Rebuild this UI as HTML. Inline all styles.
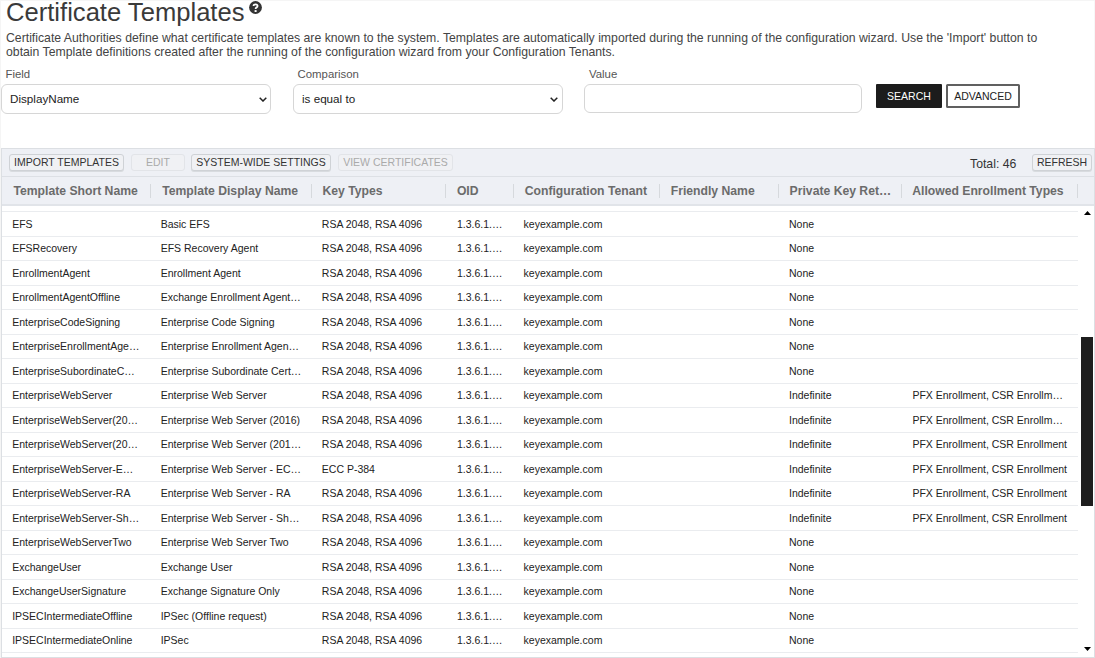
<!DOCTYPE html>
<html><head><meta charset="utf-8">
<style>
html,body{margin:0;padding:0;}
body{width:1095px;height:658px;overflow:hidden;position:relative;background:#fff;box-shadow:inset 1px 1px 0 #f5f5f5, inset -1px 0 0 #f7f7f7;font-family:"Liberation Sans",sans-serif;color:#333;}
.abs{position:absolute;white-space:nowrap;}
#title{left:6px;top:-3.3px;font-size:25.6px;line-height:30px;color:#3a3a3a;}
#help{left:249px;top:1.3px;width:12.8px;height:12.8px;border-radius:50%;background:#333;color:#fff;font-size:10.5px;font-weight:bold;line-height:14.5px;text-align:center;}
#desc{left:6px;top:32.3px;font-size:12.25px;line-height:13.5px;color:#444;}
.lbl{font-size:11.4px;line-height:14px;color:#555;top:67px;}
.sel{top:84px;height:30px;box-sizing:border-box;border:1px solid #d6d6d6;border-radius:6px;background:#fff;font-size:11.67px;color:#222;line-height:28px;padding-left:8px;}
.chev{position:absolute;top:12px;width:8px;height:5px;}
#search{left:876px;top:84px;width:66px;height:23.5px;background:#1c1c1c;color:#fff;font-size:10.5px;line-height:24px;border-radius:1px;text-align:center;}
#adv{left:946px;top:84px;width:74px;height:23.5px;box-sizing:border-box;border:2px solid #606060;border-radius:1.5px;background:#fff;color:#222;font-size:10.5px;line-height:21px;text-align:center;}
#grid{left:1px;top:148px;width:1094px;height:510px;box-sizing:border-box;border:1px solid #dcdfe3;border-bottom:1px solid #dcdfe3;background:#fff;overflow:hidden;}
#toolbar{position:absolute;left:0;top:0;width:100%;height:27px;background:#eef0f5;border-bottom:1px solid #dde0e5;}
.btn{position:absolute;top:5px;height:16.5px;box-sizing:border-box;border:1px solid #cfd2d6;border-radius:3px;background:#f0f1f4;font-size:10.5px;line-height:15px;color:#333;text-align:center;box-shadow:0 1px 0 #d8dbdf;}
.btn.dis{color:#aaa;border-color:#e2e4e8;box-shadow:none;}
#total{position:absolute;left:968px;top:7px;font-size:12.25px;line-height:16px;color:#333;}
#header{position:absolute;left:0;top:28px;width:100%;height:27px;background:#eef0f5;border-bottom:2px solid #e1e4e9;}
.h{position:absolute;top:1px;line-height:27px;font-size:12.2px;font-weight:bold;color:#6b6b6b;white-space:nowrap;}
.sep{position:absolute;top:7px;width:1px;height:14px;background:#d6d9dd;}
#body{position:absolute;left:0;top:57px;width:1092px;height:452px;overflow:hidden;}
.row{position:absolute;left:0;width:1076px;height:24.5px;border-bottom:1px solid #eaecef;box-sizing:border-box;}
.c{position:absolute;top:0.8px;line-height:23.5px;font-size:10.5px;color:#222;white-space:nowrap;}
#thumb{position:absolute;left:1079px;top:188px;width:12px;height:169px;background:#1e1e1e;}
</style></head><body>
<div class="abs" id="title">Certificate Templates</div>
<svg class="abs" style="left:248.9px;top:1.2px" width="13" height="13" viewBox="0 0 13 13"><circle cx="6.5" cy="6.5" r="6.4" fill="#333"/><path d="M4.5 5.1 C4.5 3.9 5.4 3.3 6.5 3.3 C7.7 3.3 8.6 4.0 8.6 5.0 C8.6 6.1 7.4 6.4 6.9 7.0 C6.7 7.3 6.6 7.6 6.6 8.1" fill="none" stroke="#fff" stroke-width="1.7"/><rect x="5.6" y="9.1" width="2" height="1.9" fill="#fff"/></svg>
<div class="abs" id="desc">Certificate Authorities define what certificate templates are known to the system. Templates are automatically imported during the running of the configuration wizard. Use the 'Import' button to<br>obtain Template definitions created after the running of the configuration wizard from your Configuration Tenants.</div>
<div class="abs lbl" style="left:5.5px">Field</div>
<div class="abs lbl" style="left:297.5px">Comparison</div>
<div class="abs lbl" style="left:589px">Value</div>
<div class="abs sel" style="left:1px;width:270px">DisplayName<svg class="chev" style="left:257px" viewBox="0 0 8 5"><path d="M0.7 0.7 L4 4 L7.3 0.7" fill="none" stroke="#222" stroke-width="1.5"/></svg></div>
<div class="abs sel" style="left:293px;width:270px">is equal to<svg class="chev" style="left:256px" viewBox="0 0 8 5"><path d="M0.7 0.7 L4 4 L7.3 0.7" fill="none" stroke="#222" stroke-width="1.5"/></svg></div>
<div class="abs sel" style="left:584px;width:278px;height:28.5px"></div>
<div class="abs" id="search">SEARCH</div>
<div class="abs" id="adv">ADVANCED</div>
<div class="abs" id="grid">
 <div id="toolbar">
  <div class="btn" style="left:7px;width:115px">IMPORT TEMPLATES</div>
  <div class="btn dis" style="left:129px;width:54px">EDIT</div>
  <div class="btn" style="left:189px;width:140px">SYSTEM-WIDE SETTINGS</div>
  <div class="btn dis" style="left:336px;width:115px">VIEW CERTIFICATES</div>
  <div id="total">Total: 46</div>
  <div class="btn" style="left:1030px;width:60px">REFRESH</div>
 </div>
 <div id="header"><span class="h" style="left:11.40px">Template Short Name</span><span class="h" style="left:160.20px">Template Display Name</span><span class="h" style="left:320.40px">Key Types</span><span class="h" style="left:454.90px">OID</span><span class="h" style="left:522.70px">Configuration Tenant</span><span class="h" style="left:668.70px">Friendly Name</span><span class="h" style="left:787.60px">Private Key Ret…</span><span class="h" style="left:910.20px">Allowed Enrollment Types</span><i class="sep" style="left:148.00px"></i><i class="sep" style="left:309.00px"></i><i class="sep" style="left:443.00px"></i><i class="sep" style="left:511.00px"></i><i class="sep" style="left:657.00px"></i><i class="sep" style="left:776.00px"></i><i class="sep" style="left:899.00px"></i><i class="sep" style="left:1075.00px"></i></div>
 <div id="body"><div class="row" style="top:-18.50px"></div><div class="row" style="top:6.00px"><span class="c" style="left:10.20px">EFS</span><span class="c" style="left:158.70px">Basic EFS</span><span class="c" style="left:319.80px">RSA 2048, RSA 4096</span><span class="c" style="left:455.00px">1.3.6.1.…</span><span class="c" style="left:521.60px">keyexample.com</span><span class="c" style="left:787.00px">None</span></div><div class="row" style="top:30.50px"><span class="c" style="left:10.20px">EFSRecovery</span><span class="c" style="left:158.70px">EFS Recovery Agent</span><span class="c" style="left:319.80px">RSA 2048, RSA 4096</span><span class="c" style="left:455.00px">1.3.6.1.…</span><span class="c" style="left:521.60px">keyexample.com</span><span class="c" style="left:787.00px">None</span></div><div class="row" style="top:55.00px"><span class="c" style="left:10.20px">EnrollmentAgent</span><span class="c" style="left:158.70px">Enrollment Agent</span><span class="c" style="left:319.80px">RSA 2048, RSA 4096</span><span class="c" style="left:455.00px">1.3.6.1.…</span><span class="c" style="left:521.60px">keyexample.com</span><span class="c" style="left:787.00px">None</span></div><div class="row" style="top:79.50px"><span class="c" style="left:10.20px">EnrollmentAgentOffline</span><span class="c" style="left:158.70px">Exchange Enrollment Agent…</span><span class="c" style="left:319.80px">RSA 2048, RSA 4096</span><span class="c" style="left:455.00px">1.3.6.1.…</span><span class="c" style="left:521.60px">keyexample.com</span><span class="c" style="left:787.00px">None</span></div><div class="row" style="top:104.00px"><span class="c" style="left:10.20px">EnterpriseCodeSigning</span><span class="c" style="left:158.70px">Enterprise Code Signing</span><span class="c" style="left:319.80px">RSA 2048, RSA 4096</span><span class="c" style="left:455.00px">1.3.6.1.…</span><span class="c" style="left:521.60px">keyexample.com</span><span class="c" style="left:787.00px">None</span></div><div class="row" style="top:128.50px"><span class="c" style="left:10.20px">EnterpriseEnrollmentAge…</span><span class="c" style="left:158.70px">Enterprise Enrollment Agen…</span><span class="c" style="left:319.80px">RSA 2048, RSA 4096</span><span class="c" style="left:455.00px">1.3.6.1.…</span><span class="c" style="left:521.60px">keyexample.com</span><span class="c" style="left:787.00px">None</span></div><div class="row" style="top:153.00px"><span class="c" style="left:10.20px">EnterpriseSubordinateC…</span><span class="c" style="left:158.70px">Enterprise Subordinate Cert…</span><span class="c" style="left:319.80px">RSA 2048, RSA 4096</span><span class="c" style="left:455.00px">1.3.6.1.…</span><span class="c" style="left:521.60px">keyexample.com</span><span class="c" style="left:787.00px">None</span></div><div class="row" style="top:177.50px"><span class="c" style="left:10.20px">EnterpriseWebServer</span><span class="c" style="left:158.70px">Enterprise Web Server</span><span class="c" style="left:319.80px">RSA 2048, RSA 4096</span><span class="c" style="left:455.00px">1.3.6.1.…</span><span class="c" style="left:521.60px">keyexample.com</span><span class="c" style="left:787.00px">Indefinite</span><span class="c" style="left:910.40px">PFX Enrollment, CSR Enrollm…</span></div><div class="row" style="top:202.00px"><span class="c" style="left:10.20px">EnterpriseWebServer(20…</span><span class="c" style="left:158.70px">Enterprise Web Server (2016)</span><span class="c" style="left:319.80px">RSA 2048, RSA 4096</span><span class="c" style="left:455.00px">1.3.6.1.…</span><span class="c" style="left:521.60px">keyexample.com</span><span class="c" style="left:787.00px">Indefinite</span><span class="c" style="left:910.40px">PFX Enrollment, CSR Enrollm…</span></div><div class="row" style="top:226.50px"><span class="c" style="left:10.20px">EnterpriseWebServer(20…</span><span class="c" style="left:158.70px">Enterprise Web Server (201…</span><span class="c" style="left:319.80px">RSA 2048, RSA 4096</span><span class="c" style="left:455.00px">1.3.6.1.…</span><span class="c" style="left:521.60px">keyexample.com</span><span class="c" style="left:787.00px">Indefinite</span><span class="c" style="left:910.40px">PFX Enrollment, CSR Enrollment</span></div><div class="row" style="top:251.00px"><span class="c" style="left:10.20px">EnterpriseWebServer-E…</span><span class="c" style="left:158.70px">Enterprise Web Server - EC…</span><span class="c" style="left:319.80px">ECC P-384</span><span class="c" style="left:455.00px">1.3.6.1.…</span><span class="c" style="left:521.60px">keyexample.com</span><span class="c" style="left:787.00px">Indefinite</span><span class="c" style="left:910.40px">PFX Enrollment, CSR Enrollment</span></div><div class="row" style="top:275.50px"><span class="c" style="left:10.20px">EnterpriseWebServer-RA</span><span class="c" style="left:158.70px">Enterprise Web Server - RA</span><span class="c" style="left:319.80px">RSA 2048, RSA 4096</span><span class="c" style="left:455.00px">1.3.6.1.…</span><span class="c" style="left:521.60px">keyexample.com</span><span class="c" style="left:787.00px">Indefinite</span><span class="c" style="left:910.40px">PFX Enrollment, CSR Enrollment</span></div><div class="row" style="top:300.00px"><span class="c" style="left:10.20px">EnterpriseWebServer-Sh…</span><span class="c" style="left:158.70px">Enterprise Web Server - Sh…</span><span class="c" style="left:319.80px">RSA 2048, RSA 4096</span><span class="c" style="left:455.00px">1.3.6.1.…</span><span class="c" style="left:521.60px">keyexample.com</span><span class="c" style="left:787.00px">Indefinite</span><span class="c" style="left:910.40px">PFX Enrollment, CSR Enrollment</span></div><div class="row" style="top:324.50px"><span class="c" style="left:10.20px">EnterpriseWebServerTwo</span><span class="c" style="left:158.70px">Enterprise Web Server Two</span><span class="c" style="left:319.80px">RSA 2048, RSA 4096</span><span class="c" style="left:455.00px">1.3.6.1.…</span><span class="c" style="left:521.60px">keyexample.com</span><span class="c" style="left:787.00px">None</span></div><div class="row" style="top:349.00px"><span class="c" style="left:10.20px">ExchangeUser</span><span class="c" style="left:158.70px">Exchange User</span><span class="c" style="left:319.80px">RSA 2048, RSA 4096</span><span class="c" style="left:455.00px">1.3.6.1.…</span><span class="c" style="left:521.60px">keyexample.com</span><span class="c" style="left:787.00px">None</span></div><div class="row" style="top:373.50px"><span class="c" style="left:10.20px">ExchangeUserSignature</span><span class="c" style="left:158.70px">Exchange Signature Only</span><span class="c" style="left:319.80px">RSA 2048, RSA 4096</span><span class="c" style="left:455.00px">1.3.6.1.…</span><span class="c" style="left:521.60px">keyexample.com</span><span class="c" style="left:787.00px">None</span></div><div class="row" style="top:398.00px"><span class="c" style="left:10.20px">IPSECIntermediateOffline</span><span class="c" style="left:158.70px">IPSec (Offline request)</span><span class="c" style="left:319.80px">RSA 2048, RSA 4096</span><span class="c" style="left:455.00px">1.3.6.1.…</span><span class="c" style="left:521.60px">keyexample.com</span><span class="c" style="left:787.00px">None</span></div><div class="row" style="top:422.50px"><span class="c" style="left:10.20px">IPSECIntermediateOnline</span><span class="c" style="left:158.70px">IPSec</span><span class="c" style="left:319.80px">RSA 2048, RSA 4096</span><span class="c" style="left:455.00px">1.3.6.1.…</span><span class="c" style="left:521.60px">keyexample.com</span><span class="c" style="left:787.00px">None</span></div>
  <svg style="position:absolute;left:1082px;top:5px" width="7" height="4" viewBox="0 0 7 4"><path d="M0 4 L3.5 0 L7 4Z" fill="#000"/></svg>
  <svg style="position:absolute;left:1082px;top:441px" width="7" height="4" viewBox="0 0 7 4"><path d="M0 0 L3.5 4 L7 0Z" fill="#000"/></svg>
 </div>
 <div id="thumb"></div>
</div>
</body></html>
